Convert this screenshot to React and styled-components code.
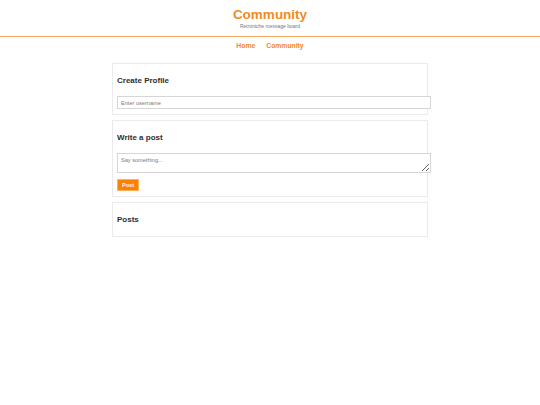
import React from 'react'
import styled, { createGlobalStyle } from 'styled-components'

const GlobalStyle = createGlobalStyle`
  body {
    margin: 0;
    background: #fff;
    font-family: "Liberation Sans", Arial, sans-serif;
    color: #333;
  }
`

const Header = styled.header`
  padding: 7px 0 7px;
  text-align: center;
  border-bottom: 1px solid #f5a864;
`

const Title = styled.h1`
  margin: 0;
  font-size: 13.5px;
  line-height: 16px;
  font-weight: bold;
  color: #f28a22;
`

const Subtitle = styled.div`
  font-size: 5px;
  line-height: 6px;
  color: #777;
`

const Nav = styled.nav`
  display: flex;
  justify-content: center;
  gap: 11px;
  padding-top: 5px;
  margin-bottom: 13px;
`

const NavLink = styled.a`
  font-size: 6.8px;
  line-height: 8px;
  font-weight: bold;
  color: #f28a22;
  text-decoration: none;
`

const Main = styled.main`
  width: 316px;
  margin: 0 auto;
  display: flex;
  flex-direction: column;
  gap: 5px;
`

const Card = styled.section`
  display: flex;
  flex-direction: column;
  align-items: flex-start;
  border: 1px solid #ebebeb;
  box-shadow: 0 0 1px rgba(0, 0, 0, 0.04);
  padding: 5px 4px;
  background: #fff;
`

const CardTitle = styled.h2`
  margin: 7px 0 6px;
  font-size: 8px;
  line-height: 10px;
  font-weight: bold;
  color: #2e2e2e;
`

const Input = styled.input`
  display: block;
  width: 100%;
  height: 11px;
  margin-top: 4px;
  padding: 0 3px;
  border: 1px solid #d6d6d6;
  font-family: inherit;
  font-size: 5.6px;
  outline: none;
  &::placeholder { color: #7a7a7a; }
`

const TextArea = styled.textarea`
  display: block;
  box-sizing: border-box;
  width: calc(100% + 8px);
  height: 20px;
  margin: 4px 0 0;
  padding: 3px 3px;
  border: 1px solid #d6d6d6;
  font-family: inherit;
  font-size: 5.6px;
  outline: none;
  &::placeholder { color: #7a7a7a; }
`

const Button = styled.button`
  display: block;
  margin-top: 6px;
  width: 22px;
  height: 12px;
  padding: 0;
  background: #ff7f00;
  border: 1px solid #ffb15e;
  color: #fff;
  font-family: inherit;
  font-weight: bold;
  font-size: 5.6px;
`

export default function App() {
  return (
    <>
      <GlobalStyle />
      <Header>
        <Title>Community</Title>
        <Subtitle>Retroniche message board</Subtitle>
      </Header>
      <Nav>
        <NavLink href="#">Home</NavLink>
        <NavLink href="#">Community</NavLink>
      </Nav>
      <Main>
        <Card>
          <CardTitle>Create Profile</CardTitle>
          <Input placeholder="Enter username" />
        </Card>
        <Card>
          <CardTitle>Write a post</CardTitle>
          <TextArea placeholder="Say something..." />
          <Button>Post</Button>
        </Card>
        <Card>
          <CardTitle>Posts</CardTitle>
        </Card>
      </Main>
    </>
  )
}
